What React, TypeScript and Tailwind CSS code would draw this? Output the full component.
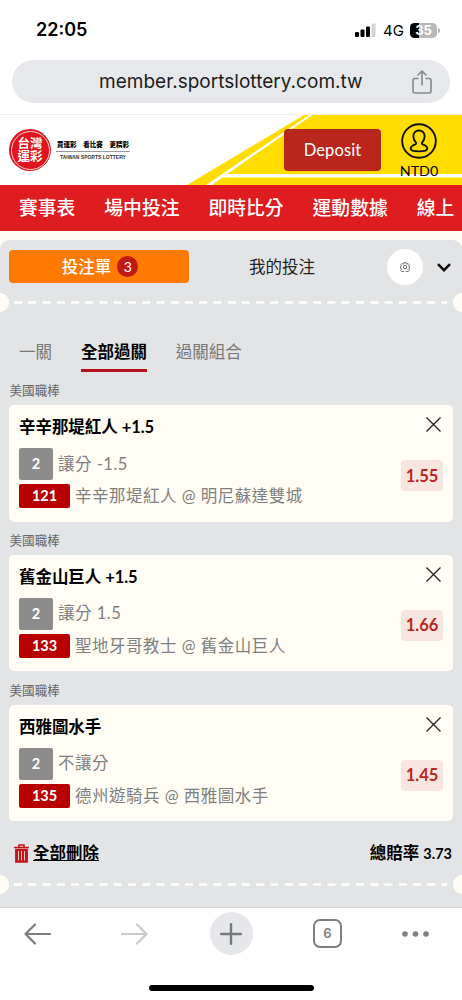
import React from "react";

type Bet = {
  title: string;
  play: string;
  code: string;
  match: string;
  odds: string;
};

const navItems = ["賽事表", "場中投注", "即時比分", "運動數據", "線上"];

const bets: Bet[] = [
  {
    title: "辛辛那堤紅人 +1.5",
    play: "讓分 -1.5",
    code: "121",
    match: "辛辛那堤紅人 @ 明尼蘇達雙城",
    odds: "1.55",
  },
  {
    title: "舊金山巨人 +1.5",
    play: "讓分 1.5",
    code: "133",
    match: "聖地牙哥教士 @ 舊金山巨人",
    odds: "1.66",
  },
  {
    title: "西雅圖水手",
    play: "不讓分",
    code: "135",
    match: "德州遊騎兵 @ 西雅圖水手",
    odds: "1.45",
  },
];

const StatusBar = () => (
  <div className="flex h-[60px] shrink-0 items-center justify-between pl-9 pr-[22px] font-['Inter',sans-serif]">
    <span className="text-[18px] font-semibold leading-none text-black">
      22:05
    </span>
    <div className="flex items-center">
      <svg width="21" height="14" viewBox="0 0 21 14">
        <rect x="0" y="9" width="4" height="5" rx="1" />
        <rect x="5.5" y="6.5" width="4" height="7.5" rx="1" />
        <rect x="11" y="3.5" width="4" height="10.5" rx="1" />
        <rect x="16.5" y="0.5" width="4" height="13.5" rx="1" fill="#d4d4d4" />
      </svg>
      <span className="ml-[7px] text-[15px] leading-none text-black">4G</span>
      <span className="ml-[6px] flex h-[15px] w-[27px] items-center justify-center rounded-[4.5px] bg-linear-to-r from-black from-35% to-[#b8b8b8] to-35% text-[13px] font-bold leading-none text-white">
        35
      </span>
      <span className="ml-px h-[5px] w-[2px] rounded-r bg-[#b8b8b8]" />
    </div>
  </div>
);

const AddressBar = () => (
  <div className="h-[54px] shrink-0 px-3">
    <div className="flex h-[43px] items-center justify-between rounded-full bg-[#e6e8eb] pl-[87px] pr-[17px]">
      <span className="whitespace-nowrap font-['Inter',sans-serif] text-[19px] leading-none tracking-[0.02px] text-[#1c1d20]">
        member.sportslottery.com.tw
      </span>
      <svg
        width="22"
        height="24"
        viewBox="0 0 22 24"
        fill="none"
        stroke="#85888d"
        strokeWidth="1.6"
        strokeLinecap="round"
        strokeLinejoin="round"
      >
        <path d="M7 8.5H4a2 2 0 0 0-2 2V21a2 2 0 0 0 2 2h14a2 2 0 0 0 2-2V10.5a2 2 0 0 0-2-2h-3" />
        <path d="M11 15V1.5M7 5l4-4 4 4" />
      </svg>
    </div>
  </div>
);

const Logo = () => (
  <div className="flex items-center">
    <div className="flex size-[42px] items-center justify-center rounded-full bg-[#e0141c]">
      <div className="flex size-[39px] flex-col items-center justify-center rounded-full border border-white/80 text-[12.5px] font-bold leading-[13px] text-white">
        <span>台灣</span>
        <span>運彩</span>
      </div>
    </div>
    <div className="ml-[5px] w-[74px]">
      <div className="flex justify-between border-b border-[#999] px-px pb-[2px] text-[6.5px] font-black leading-[8px] text-black">
        <span>買運彩</span>
        <span>看比賽</span>
        <span>更精彩</span>
      </div>
      <div className="pt-[2px] text-center font-['Liberation_Sans',sans-serif] text-[5px] font-bold leading-[6px] whitespace-nowrap text-[#333]">
        TAIWAN SPORTS LOTTERY
      </div>
    </div>
  </div>
);

const Header = () => (
  <header className="relative h-[71px] shrink-0 border-t border-[#efefef]">
    <svg
      className="absolute inset-0"
      width="462"
      height="70"
      viewBox="0 0 462 70"
    >
      <path d="M187 70 304 0H462V70Z" fill="#ffdd00" />
      <path d="M206 70 309 0h3.5L227 59 212 70Z" fill="#fff" />
      <path d="M224 59H462v3.5H218Z" fill="#fff" />
    </svg>
    <div className="relative flex h-full items-center justify-between pl-[9px] pr-[23px]">
      <Logo />
      <div className="flex items-center">
        <button className="h-[42px] w-[97px] rounded-[4px] bg-[#b8261c] text-[16.5px] tracking-[0.1px] text-white">
          Deposit
        </button>
        <div className="ml-[18px] flex w-10 flex-col items-center pt-[3px]">
          <svg
            width="36"
            height="36"
            viewBox="0 0 36 36"
            fill="none"
            stroke="#111"
            strokeWidth="1.9"
          >
            <circle cx="18" cy="18" r="16.8" />
            <path d="M18 7.5c-3.500 0-5.600 2.500-5.600 5.900 0 2.500 1 4.500 2.400 5.900.6.7.3 1.700-.5 2-2.600.9-4.600 2-4.600 4.200 0 2 3.500 2.900 8.300 2.900s8.300-.9 8.300-2.900c0-2.200-2-3.300-4.600-4.200-.8-.3-1.100-1.300-.5-2 1.400-1.400 2.400-3.400 2.400-5.900 0-3.400-2.100-5.900-5.600-5.900Z" />
          </svg>
          <span className="mt-[3px] text-[14.3px] leading-[18px] text-black">
            NTD0
          </span>
        </div>
      </div>
    </div>
  </header>
);

const DashedLine = () => (
  <div className="flex h-[19px] items-center justify-between">
    <span className="h-[19px] w-[9px] rounded-r-full bg-[#fffdf3]" />
    <svg width="436" height="3" viewBox="0 0 436 3">
      <path
        d="M1 1.5H434"
        stroke="#fff"
        strokeWidth="2.6"
        strokeDasharray="8 6.25"
      />
    </svg>
    <span className="h-[19px] w-[9px] rounded-l-full bg-[#fffdf3]" />
  </div>
);

const BetCard = ({ bet }: { bet: Bet }) => (
  <section className="h-[149.8px]">
    <h3 className="flex h-[27px] items-center pl-[0.5px] text-[12.6px] text-[#666]">
      美國職棒
    </h3>
    <div className="flex h-[116.5px] justify-between rounded-[5px] bg-[#fffdf4] pl-[10px] pr-[10px]">
      <div className="pt-[10px]">
        <h4 className="text-[16.5px] font-bold leading-6 tracking-[-0.05px] text-black">
          {bet.title}
        </h4>
        <div className="mt-[9px] flex h-8 items-center">
          <span className="flex h-8 w-[34px] items-center justify-center rounded-[2px] bg-[#8c8c8c] text-[14.5px] font-bold text-white">
            2
          </span>
          <span className="ml-[5px] text-[16.5px] tracking-[0.5px] text-[#808080]">
            {bet.play}
          </span>
        </div>
        <div className="mt-1 flex h-6 items-center">
          <span className="flex h-6 w-[51px] items-center justify-center rounded-[2px] bg-[#b80000] text-[14.5px] font-bold text-white">
            {bet.code}
          </span>
          <span className="ml-[5px] whitespace-nowrap pt-px text-[16.5px] tracking-[0.5px] text-[#808080]">
            {bet.match}
          </span>
        </div>
      </div>
      <div className="flex flex-col items-end pt-3">
        <svg
          className="mr-[2px]"
          width="15"
          height="15"
          viewBox="0 0 15 15"
          stroke="#222"
          strokeWidth="1.3"
        >
          <path d="M.5.5l14 14M14.5.5l-14 14" />
        </svg>
        <span className="mt-[28px] flex h-[31px] w-[42px] items-center justify-center rounded-[4px] bg-[#f9e5e0] pt-px text-[16.5px] font-bold text-[#b8261c]">
          {bet.odds}
        </span>
      </div>
    </div>
  </section>
);

const BottomBar = () => (
  <footer className="flex h-[93px] shrink-0 flex-col items-center border-t border-[#d5d7da] bg-white">
    <div className="flex h-[51px] w-full items-center pl-[24px] text-[#7b8085]">
      <svg
        width="27"
        height="22"
        viewBox="0 0 27 22"
        fill="none"
        stroke="#787d82"
        strokeWidth="2.2"
        strokeLinecap="round"
        strokeLinejoin="round"
      >
        <path d="M26 11H1.5M11 1.5 1.5 11l9.5 9.5" />
      </svg>
      <svg
        className="ml-[70px]"
        width="27"
        height="22"
        viewBox="0 0 27 22"
        fill="none"
        stroke="#c8c9cb"
        strokeWidth="2.2"
        strokeLinecap="round"
        strokeLinejoin="round"
      >
        <path d="M1 11h24.5M16 1.5l9.5 9.5-9.5 9.5" />
      </svg>
      <span className="ml-[61.5px] flex size-[43px] items-center justify-center rounded-full bg-[#e6e7ea]">
        <svg
          width="22"
          height="22"
          viewBox="0 0 22 22"
          stroke="#75797f"
          strokeWidth="2.4"
          strokeLinecap="round"
        >
          <path d="M11 1.2v19.6M1.2 11h19.6" />
        </svg>
      </span>
      <span className="ml-[60.5px] flex size-[29px] items-center justify-center rounded-[7px] border-2 border-[#7b8085] font-['Inter',sans-serif] text-[13px] font-semibold">
        6
      </span>
      <svg
        className="ml-[60px]"
        width="27"
        height="6"
        viewBox="0 0 27 6"
        fill="#7b8085"
      >
        <circle cx="3" cy="3" r="2.8" />
        <circle cx="13.5" cy="3" r="2.8" />
        <circle cx="24" cy="3" r="2.8" />
      </svg>
    </div>
    <span className="mt-[26px] h-[6px] w-[165px] rounded-full bg-black" />
  </footer>
);

const App = () => {
  return (
    <main className="flex h-[1000px] w-[462px] flex-col overflow-hidden bg-white font-['Lato','Noto_Sans_CJK_TC',sans-serif]">
      <StatusBar />
      <AddressBar />
      <Header />
      <nav className="flex h-[46px] shrink-0 items-center gap-[29px] overflow-hidden whitespace-nowrap bg-[#df1c20] pl-[19px] pt-px text-[18.8px] font-medium text-white">
        {navItems.map((item) => (
          <a key={item} className="shrink-0">
            {item}
          </a>
        ))}
      </nav>

      <div className="flex-1 bg-[#fffdf3] pt-[9px]">
        <div className="h-full rounded-t-[9px] bg-[#e3e4e6] pt-[10px]">
          <div className="flex h-[33px] items-center pl-[9px] pr-[11px]">
            <button className="flex h-[33px] w-[180px] items-center justify-center rounded-[4px] bg-[#ff7a00] pl-[2px] text-[16.5px] font-medium text-white">
              <span className="pt-[2px]">投注單</span>
              <span className="ml-[6px] flex size-[21px] items-center justify-center rounded-full bg-[#c11a14] text-[14px] font-normal">
                3
              </span>
            </button>
            <span className="ml-[60px] pt-px text-[16.5px] text-[#222]">
              我的投注
            </span>
            <span className="ml-auto flex size-9 items-center justify-center rounded-full bg-white">
              <svg
                width="10"
                height="10"
                viewBox="0 0 24 24"
                fill="none"
                stroke="#555"
                strokeWidth="2"
              >
                <path d="M9.7 1.5h4.600l.6 2.800 1.800.8 2.500-1.600 3 3.200-1.500 2.500.7 1.800 2 .7v3.600l-2 .7-.7 1.800 1.500 2.500-3 3.200-2.500-1.600-1.800.8-.6 2.300H9.700l-.6-2.300-1.800-.8-2.500 1.600-3-3.200 1.500-2.500-.7-1.800-2-.7v-3.600l2-.7.7-1.800-1.500-2.500 3-3.200 2.500 1.600 1.800-.8Z" />
                <circle cx="12" cy="12" r="4" />
              </svg>
            </span>
            <svg
              className="ml-[14px] mt-[2px]"
              width="14"
              height="9"
              viewBox="0 0 14 9"
              fill="none"
              stroke="#111"
              strokeWidth="2.6"
            >
              <path d="M1 1.2 7 7.2l6-6" />
            </svg>
          </div>

          <div className="mt-[10px]">
            <DashedLine />
          </div>

          <div className="mt-[26px] flex h-[34px] gap-[28.9px] pl-[19px] text-[16.5px] leading-[28px] text-[#777]">
            <span>一關</span>
            <span className="border-b-[3.5px] border-[#b5121b] font-bold text-black">
              全部過關
            </span>
            <span>過關組合</span>
          </div>

          <div className="mt-[6px] px-[9px]">
            {bets.map((bet) => (
              <BetCard key={bet.code} bet={bet} />
            ))}
          </div>

          <div className="flex h-[47.6px] items-center justify-between pl-[14px] pr-[10px] pt-[4px] text-[16.5px] font-bold text-black">
            <span className="flex items-center">
              <svg
                width="15"
                height="19"
                viewBox="0 0 15 19"
                fill="none"
                stroke="#c4141b"
              >
                <path d="M0 3.5H15M5 3V1h5v2" strokeWidth="1.6" />
                <path
                  d="M1.8 5.5h11.4V18H1.8Z"
                  fill="#c4141b"
                  strokeWidth="1.4"
                />
                <path
                  d="M4.5 7v9.5M7.5 7v9.5M10.5 7v9.5"
                  stroke="#e9c3c5"
                  strokeWidth="1"
                />
              </svg>
              <span className="ml-[4px] underline">全部刪除</span>
            </span>
            <span>
              總賠率 <span className="text-[14.5px]">3.73</span>
            </span>
          </div>
          <DashedLine />
        </div>
      </div>
      <BottomBar />
    </main>
  );
};

export default App;
